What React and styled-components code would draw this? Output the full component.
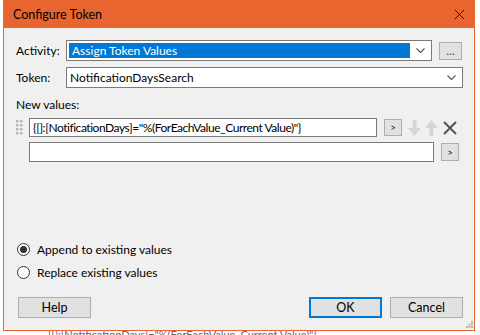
import React from 'react'
import styled, { createGlobalStyle, css } from 'styled-components'

const GlobalStyle = createGlobalStyle`
  html, body {
    margin: 0;
    padding: 0;
    background: #fff;
  }
  body {
    font-family: Lato, "Noto Sans", Arial, sans-serif;
    font-size: 12px;
    color: #000;
  }
`

const orange = '#E96530'

const Page = styled.div`
  width: 480px;
  height: 335px;
  overflow: hidden;
  padding-left: 3px;
  box-sizing: border-box;
`

const Window = styled.div`
  width: 472px;
  height: 331px;
  box-sizing: border-box;
  border: 1px solid ${orange};
  border-top: 0;
  background: #f0f0f0;
  display: flex;
  flex-direction: column;
`

const TitleBar = styled.div`
  height: 28px;
  margin: 0 -1px;
  background: ${orange};
  display: flex;
  align-items: center;
  justify-content: space-between;
  padding: 0 10px 0 10px;
  font-size: 12.5px;
  color: #000;
`

const Body = styled.div`
  flex: 1;
  display: flex;
  flex-direction: column;
  padding: 12px 11px 0 12px;
  position: relative;
`

const FieldRow = styled.div`
  display: flex;
  align-items: center;
  height: 21px;
  margin-bottom: ${p => p.$mb || 0}px;
`

const Label = styled.div`
  width: 50px;
  flex: none;
`

const Combo = styled.div`
  width: ${p => p.$w}px;
  height: 21px;
  box-sizing: border-box;
  border: 1px solid #7a7a7a;
  background: #fff;
  display: flex;
  align-items: center;
  padding: 0 6px 0 2px;
`

const ComboText = styled.div`
  flex: 1;
  height: 15px;
  line-height: 15px;
  padding-left: ${p => (p.$selected ? 3 : 1)}px;
  ${p =>
    p.$selected &&
    css`
      background: #0078d7;
      color: #fff;
      margin-right: 6px;
    `}
`

const SmallButton = styled.button`
  width: ${p => p.$w || 23}px;
  height: ${p => p.$h || 18}px;
  margin-left: ${p => p.$ml || 0}px;
  padding: 0;
  box-sizing: border-box;
  border: 1px solid #adadad;
  background: #e1e1e1;
  font: inherit;
  font-size: ${p => p.$fs || 12}px;
  line-height: 1;
  color: ${p => p.$color || '#000'};
  display: flex;
  align-items: center;
  justify-content: center;
  flex: none;
`

const SectionLabel = styled.div`
  margin: 9px 0 5px;
  line-height: 16px;
`

const ValueRow = styled.div`
  display: flex;
  align-items: center;
  margin-bottom: 5px;
`

const Grip = styled.div`
  width: 13px;
  flex: none;
  display: flex;
  align-items: center;
`

const TextInput = styled.div`
  width: ${p => p.$w}px;
  height: ${p => p.$h || 20}px;
  box-sizing: border-box;
  border: 1px solid #7a7a7a;
  background: #fff;
  padding: 0 3px;
  line-height: ${p => (p.$h || 20) - 2}px;
  white-space: nowrap;
  overflow: hidden;
  letter-spacing: -0.45px;
`

const IconSlot = styled.div`
  display: flex;
  align-items: center;
  margin-left: ${p => p.$ml || 0}px;
`

const Radios = styled.div`
  margin-top: auto;
  display: flex;
  flex-direction: column;
  gap: 10px;
  margin-bottom: 18px;
  padding-left: 1px;
`

const RadioRow = styled.label`
  display: flex;
  align-items: center;
  height: 13px;
`

const RadioCircle = styled.span`
  width: 13px;
  height: 13px;
  box-sizing: border-box;
  border: 1px solid #333;
  border-radius: 50%;
  background: #fff;
  display: flex;
  align-items: center;
  justify-content: center;
  margin-right: 7px;
  &::after {
    content: '';
    width: 7px;
    height: 7px;
    border-radius: 50%;
    background: ${p => (p.$checked ? '#333' : 'transparent')};
  }
`

const Footer = styled.div`
  display: flex;
  align-items: center;
  height: 21px;
  margin-bottom: 12px;
  padding-left: 2px;
`

const DialogButton = styled.button`
  width: 73px;
  height: 21px;
  box-sizing: border-box;
  background: #e1e1e1;
  border: ${p => (p.$default ? '2px solid #0078d7' : '1px solid #adadad')};
  font: inherit;
  font-size: 12.5px;
  color: #000;
  padding: 0;
  margin-left: ${p => p.$ml || 0}px;
`

const Spacer = styled.div`
  flex: 1;
`

const SizeGrip = styled.svg`
  position: absolute;
  right: 1px;
  bottom: 2px;
`

const Behind = styled.div`
  height: 4px;
  overflow: hidden;
  padding-left: 45px;
`

const BehindText = styled.div`
  font-size: 11px;
  line-height: 11px;
  color: #666;
  white-space: nowrap;
  margin-top: -2px;
`

const Chevron = () => (
  <svg width="9" height="5" viewBox="0 0 9 5">
    <path d="M0.5 0.5 L4.5 4.5 L8.5 0.5" fill="none" stroke="#555" strokeWidth="1.1" />
  </svg>
)

const GripDots = () => (
  <svg width="7" height="15" viewBox="0 0 7 15">
    {[0, 4, 8, 12].map(y =>
      [0, 4].map(x => <rect key={`${x}-${y}`} x={x} y={y} width="2.5" height="2.5" fill="#b8b8b8" />)
    )}
  </svg>
)

const ArrowDown = ({ color }) => (
  <svg width="13" height="16" viewBox="0 0 13 16">
    <path d="M4.5 0 H8.5 V8 H13 L6.5 16 L0 8 H4.5 Z" fill={color} />
  </svg>
)

const ArrowUp = ({ color }) => (
  <svg width="13" height="16" viewBox="0 0 13 16">
    <path d="M4.5 16 H8.5 V8 H13 L6.5 0 L0 8 H4.5 Z" fill={color} />
  </svg>
)

const CrossIcon = ({ size = 14, color = '#555', w = 2 }) => (
  <svg width={size} height={size} viewBox="0 0 14 14">
    <path d="M1 1 L13 13 M13 1 L1 13" stroke={color} strokeWidth={w} fill="none" />
  </svg>
)

export default function App() {
  return (
    <>
      <GlobalStyle />
      <Page>
        <Window>
          <TitleBar>
            <span>Configure Token</span>
            <CrossIcon size={11} color="#111" w={1.2} />
          </TitleBar>
          <Body>
            <FieldRow $mb={6}>
              <Label>Activity:</Label>
              <Combo $w={366}>
                <ComboText $selected>Assign Token Values</ComboText>
                <Chevron />
              </Combo>
              <SmallButton $ml={7} $w={23} $h={18} $color="#7a1f8a">...</SmallButton>
            </FieldRow>
            <FieldRow>
              <Label>Token:</Label>
              <Combo $w={397}>
                <ComboText>NotificationDaysSearch</ComboText>
                <Chevron />
              </Combo>
            </FieldRow>
            <SectionLabel>New values:</SectionLabel>
            <ValueRow>
              <Grip>
                <GripDots />
              </Grip>
              <TextInput $w={348} $h={19}>{'{[]:[NotificationDays]="%(ForEachValue_Current Value)"}'}</TextInput>
              <SmallButton $ml={7} $w={18} $h={17} $fs={9}>&gt;</SmallButton>
              <IconSlot $ml={6}>
                <ArrowDown color="#cdd7e1" />
              </IconSlot>
              <IconSlot $ml={4}>
                <ArrowUp color="#cdd7e1" />
              </IconSlot>
              <IconSlot $ml={5}>
                <CrossIcon />
              </IconSlot>
            </ValueRow>
            <ValueRow>
              <Grip />
              <TextInput $w={405} $h={20} />
              <SmallButton $ml={7} $w={18} $h={18} $fs={9}>&gt;</SmallButton>
            </ValueRow>
            <Radios>
              <RadioRow>
                <RadioCircle $checked />
                Append to existing values
              </RadioRow>
              <RadioRow>
                <RadioCircle />
                Replace existing values
              </RadioRow>
            </Radios>
            <Footer>
              <DialogButton>Help</DialogButton>
              <Spacer />
              <DialogButton $default>OK</DialogButton>
              <DialogButton $ml={8}>Cancel</DialogButton>
            </Footer>
            <SizeGrip width="7" height="7" viewBox="0 0 7 7">
              <rect x="5" y="0" width="2" height="2" fill="#b5b5b5" />
              <rect x="2.5" y="2.5" width="2" height="2" fill="#b5b5b5" />
              <rect x="5" y="2.5" width="2" height="2" fill="#b5b5b5" />
              <rect x="0" y="5" width="2" height="2" fill="#b5b5b5" />
              <rect x="2.5" y="5" width="2" height="2" fill="#b5b5b5" />
              <rect x="5" y="5" width="2" height="2" fill="#b5b5b5" />
            </SizeGrip>
          </Body>
        </Window>
        <Behind>
          <BehindText>{'{[]:[NotificationDays]="%(ForEachValue_Current Value)"}'}</BehindText>
        </Behind>
      </Page>
    </>
  )
}
